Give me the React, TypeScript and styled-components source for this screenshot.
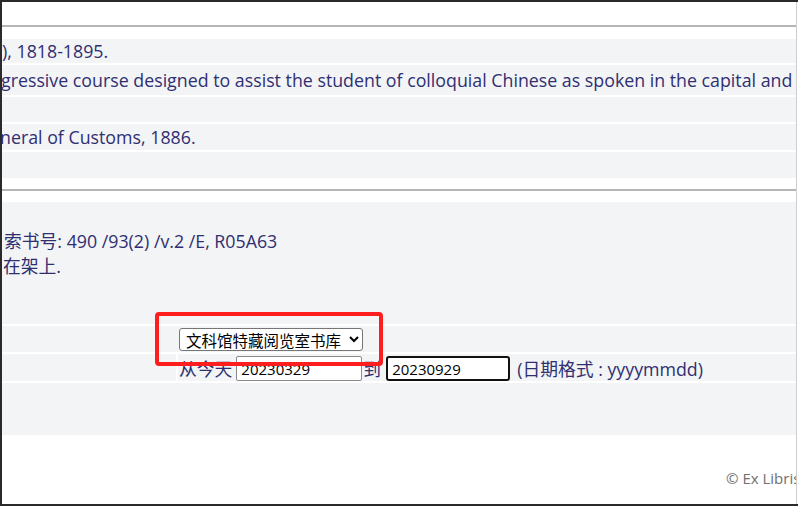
import React from "react";
import styled, { createGlobalStyle } from "styled-components";

const Global = createGlobalStyle`
  html, body { margin: 0; padding: 0; background: #ffffff; }
  body { font-family: "Open Sans", "Noto Sans CJK SC", sans-serif; }
`;

const FONT = `"Open Sans", "Noto Sans CJK SC", sans-serif`;
const NAVY = "#2f2f72";
const ROW_BG = "#f3f4f6";
const BODY_SIZE = "17.8px";

const Frame = styled.div`
  position: relative;
  width: 798px;
  height: 506px;
  box-sizing: border-box;
  border-top: 2px solid #2a2a2a;
  border-left: 2px solid #2a2a2a;
  border-bottom: 2px solid #2a2a2a;
  overflow: hidden;
  background: #ffffff;
`;

const Page = styled.div`
  width: 794px;
  height: 100%;
  border-right: 1px solid #cfcfcf;
  display: flex;
  flex-direction: column;
`;

const Rule = styled.div<{ $above: number; $below: number }>`
  height: 2px;
  background: #b5b5b5;
  margin-top: ${(p) => p.$above}px;
  margin-bottom: ${(p) => p.$below}px;
`;

const Table = styled.div`
  display: flex;
  flex-direction: column;
  gap: 2px;
`;

const Row = styled.div<{ $h: number; $indent?: number }>`
  height: ${(p) => p.$h}px;
  background: ${ROW_BG};
  display: flex;
  align-items: center;
  font-family: ${FONT};
  font-size: ${BODY_SIZE};
  color: ${NAVY};
  white-space: nowrap;
  overflow: visible;
  text-indent: ${(p) => p.$indent ?? 1}px;
`;

const Block = styled.div<{ $h: number }>`
  height: ${(p) => p.$h}px;
  background: ${ROW_BG};
  box-sizing: border-box;
  padding-top: 27px;
  font-family: ${FONT};
  font-size: ${BODY_SIZE};
  line-height: 25px;
  color: ${NAVY};
  white-space: nowrap;
`;

const BlockLine = styled.div<{ $indent: number }>`
  text-indent: ${(p) => p.$indent}px;
`;

const FormRow = styled.div<{ $h: number; $split?: boolean }>`
  height: ${(p) => p.$h}px;
  display: grid;
  grid-template-columns: 174px 1fr;
  column-gap: ${(p) => (p.$split ? 2 : 0)}px;
  background: ${(p) => (p.$split ? "#ffffff" : ROW_BG)};
`;

const Cell = styled.div`
  background: ${ROW_BG};
  display: flex;
  align-items: center;
  font-family: ${FONT};
  font-size: ${BODY_SIZE};
  color: ${NAVY};
  white-space: nowrap;
`;

const FieldCell = styled(Cell)`
  padding-left: 1px;
`;

const Select = styled.select`
  font-family: ${FONT};
  font-size: 15.5px;
  height: 23px;
  width: 184px;
  margin-top: 1px;
  margin-left: 2px;
  color: #000;
  background: #fff;
  border: 1px solid #767676;
  border-radius: 3px;
  padding: 0 2px;
`;

const DateInput = styled.input<{ $focused?: boolean }>`
  box-sizing: border-box;
  font-family: ${FONT};
  font-size: 15px;
  width: ${(p) => (p.$focused ? 124 : 126)}px;
  height: 25px;
  padding: 0 4px;
  color: #000;
  background: #fff;
  border: ${(p) => (p.$focused ? "2px solid #111" : "1px solid #8a8a8a")};
  border-radius: ${(p) => (p.$focused ? 3 : 2)}px;
  outline: none;
  margin-top: 2px;
`;

const Label = styled.span<{ $ml?: number; $mr?: number }>`
  margin-left: ${(p) => p.$ml ?? 0}px;
  margin-right: ${(p) => p.$mr ?? 0}px;
`;

const Footer = styled.div`
  flex: 1;
  display: flex;
  justify-content: flex-start;
  align-items: flex-start;
  padding-top: 33px;
  padding-left: 724px;
  overflow: hidden;
  font-family: ${FONT};
  font-size: 15px;
  color: #707070;
  white-space: nowrap;
`;

const Highlight = styled.div`
  position: absolute;
  left: 153px;
  top: 310px;
  width: 228px;
  height: 54px;
  border: 4px solid #ff1e1e;
  border-radius: 4px;
  box-sizing: border-box;
  pointer-events: none;
`;

export default function App() {
  return (
    <>
      <Global />
      <Frame>
        <Page>
          <Rule $above={23} $below={12} />
          <Table>
            <Row $h={24} $indent={0}>), 1818-1895.</Row>
            <Row $h={30} $indent={-1}>
              gressive course designed to assist the student of colloquial Chinese as spoken in the capital and
            </Row>
            <Row $h={25} />
            <Row $h={26} $indent={-2}>neral of Customs, 1886.</Row>
            <Row $h={26} />
          </Table>
          <Rule $above={11} $below={11} />
          <Table>
            <Block $h={122}>
              <BlockLine $indent={2}>索书号: 490 /93(2) /v.2 /E, R05A63</BlockLine>
              <BlockLine $indent={1}>在架上.</BlockLine>
            </Block>
            <FormRow $h={26}>
              <Cell />
              <FieldCell>
                <Select defaultValue="wk">
                  <option value="wk">文科馆特藏阅览室书库</option>
                </Select>
              </FieldCell>
            </FormRow>
            <FormRow $h={27} $split>
              <Cell />
              <FieldCell>
                <Label $mr={4}>从今天</Label>
                <DateInput defaultValue="20230329" />
                <Label $ml={1} $mr={5}>到</Label>
                <DateInput $focused defaultValue="20230929" />
                <Label $ml={7}>(日期格式 : yyyymmdd)</Label>
              </FieldCell>
            </FormRow>
            <Row $h={52} />
          </Table>
          <Footer>© Ex Libris</Footer>
        </Page>
        <Highlight />
      </Frame>
    </>
  );
}
